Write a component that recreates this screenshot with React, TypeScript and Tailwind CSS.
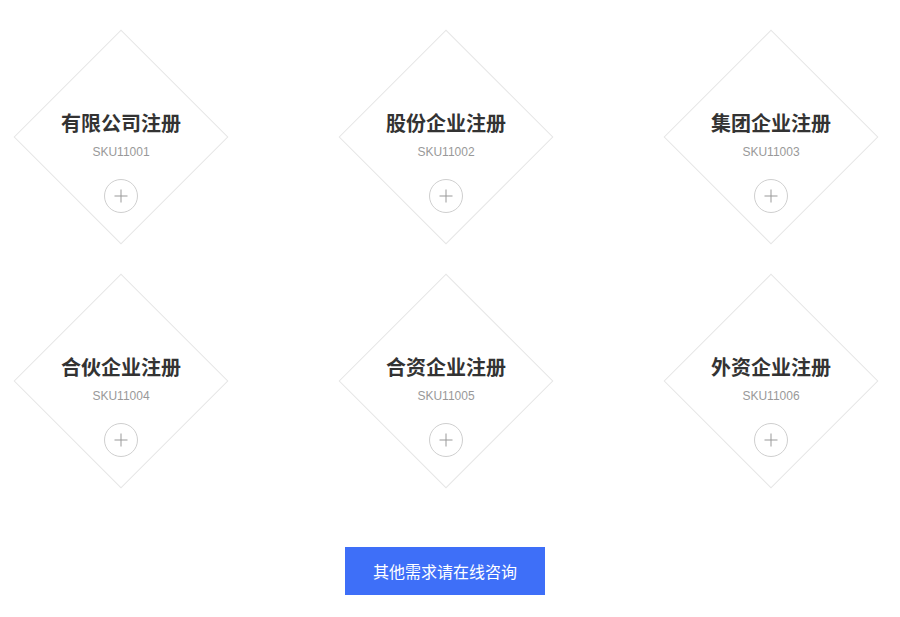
import React from "react";

const items = [
  { name: "有限公司注册", sku: "SKU11001" },
  { name: "股份企业注册", sku: "SKU11002" },
  { name: "集团企业注册", sku: "SKU11003" },
  { name: "合伙企业注册", sku: "SKU11004" },
  { name: "合资企业注册", sku: "SKU11005" },
  { name: "外资企业注册", sku: "SKU11006" },
];

const font = {
  fontFamily: '"Microsoft YaHei", "Noto Sans CJK SC", "Liberation Sans", sans-serif',
};

function Card({ name, sku }: { name: string; sku: string }) {
  return (
    <div className="relative flex h-[216px] w-[216px] flex-col items-center pt-[82px]">
      <div className="absolute left-[32px] top-[32px] h-[152px] w-[152px] rotate-45 border border-[#e6e6e6]" />
      <h3 className="relative text-[20px] font-bold leading-[24px] text-[#333]">{name}</h3>
      <p className="relative mt-[9px] font-['Liberation_Sans',sans-serif] text-[12px] leading-[16px] text-[#999]">
        {sku}
      </p>
      <button className="relative mt-[19px] flex h-[34px] w-[34px] items-center justify-center rounded-full border border-[#cfcfcf] bg-white">
        <svg width="14" height="14" viewBox="0 0 14 14" fill="none" stroke="#999" strokeWidth="1">
          <path d="M7 0.5v13M0.5 7h13" />
        </svg>
      </button>
    </div>
  );
}

export default function App() {
  return (
    <div className="min-h-[617px] w-[900px] bg-white pt-[29px]" style={font}>
      <div className="grid grid-cols-[216px_216px_216px] gap-x-[109px] gap-y-[28px] pl-[13px]">
        {items.map((it) => (
          <Card key={it.sku} {...it} />
        ))}
      </div>
      <div className="mt-[58px] pl-[345px]">
        <button className="h-[48px] w-[200px] bg-[#3e6ff8] text-[16px] text-white">
          其他需求请在线咨询
        </button>
      </div>
    </div>
  );
}
